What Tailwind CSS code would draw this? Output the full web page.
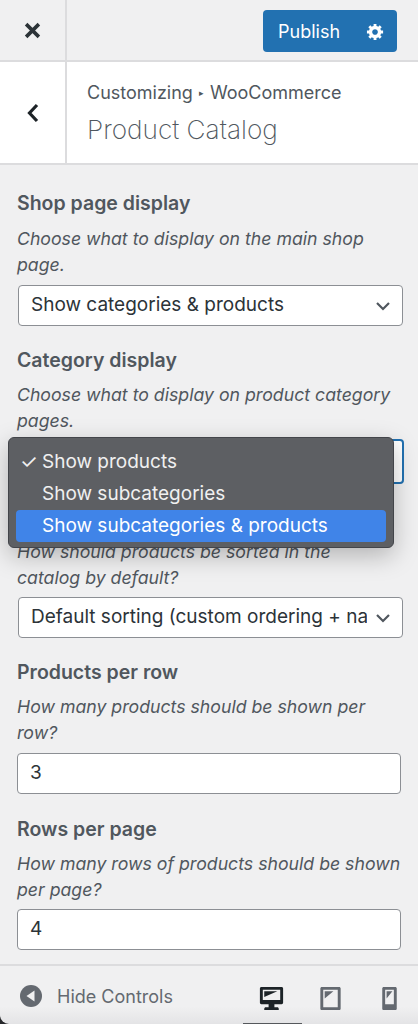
<!DOCTYPE html>
<html lang="en">
<head>
  <meta charset="UTF-8">
  <title>Product Catalog</title>
  <script src="https://cdn.jsdelivr.net/npm/@tailwindcss/browser@4"></script>
</head>
<body class="relative w-[418px] h-[1024px] overflow-hidden bg-[#f0f0f1] text-[#50575e] font-['Inter','Liberation_Sans',sans-serif]">

  <!-- Top bar -->
  <div class="flex h-[62px] border-b-2 border-[#dcdcde]">
    <div class="flex w-[67px] items-center justify-center border-r-2 border-[#dcdcde]">
      <svg class="w-[17px] h-[17px]" viewBox="0 0 16 16"><path d="M2 2l12 12M14 2L2 14" stroke="#2c3338" stroke-width="3.4" fill="none"/></svg>
    </div>
    <div class="flex flex-1 items-start justify-end pt-[10px] pr-[21px]">
      <button class="flex w-[134px] h-[42px] items-center justify-between pl-[15px] pr-[12px] rounded-[4px] bg-[#2271b1] text-white text-[18px]">
        Publish
        <svg class="w-[19px] h-[19px]" viewBox="0 0 20 20" fill="#fff"><path d="M18 12h-2.180c-.17.7-.44 1.35-.81 1.930l1.540 1.540-2.100 2.100-1.540-1.540c-.58.36-1.230.63-1.910.79V19H8v-2.180c-.68-.16-1.330-.43-1.910-.79l-1.540 1.540-2.120-2.120 1.540-1.540c-.36-.58-.63-1.230-.79-1.910H1V9.030h2.170c.16-.7.44-1.350.8-1.940L2.430 5.550l2.100-2.100 1.540 1.540c.58-.37 1.240-.64 1.930-.81V2h3v2.180c.68.16 1.330.43 1.910.79l1.540-1.540 2.120 2.120-1.540 1.540c.36.59.64 1.240.8 1.940H18V12zm-8.500 1.500c1.660 0 3-1.340 3-3s-1.340-3-3-3-3 1.340-3 3 1.340 3 3 3z"/></svg>
      </button>
    </div>
  </div>

  <!-- Section title -->
  <div class="flex h-[103px] bg-white border-b-2 border-[#dcdcde]">
    <div class="flex w-[67px] items-center justify-center border-r-2 border-[#dcdcde]">
      <svg class="w-[14px] h-[20px]" viewBox="0 0 14 20"><path d="M11 2L3.500 10l7.500 8" stroke="#1d2327" stroke-width="3.2" fill="none"/></svg>
    </div>
    <div class="pl-[20px] pt-[19px]">
      <div class="flex items-center text-[18px] leading-[24px]">Customizing<span class="mx-[6px] text-[9px]">▸</span>WooCommerce</div>
      <div class="mt-[10px] text-[26.2px] leading-[30px] font-extralight text-[#50575e]">Product Catalog</div>
    </div>
  </div>

  <!-- Controls -->
  <div class="px-[17px] pt-[26px]">
    <div class="text-[19.5px] leading-[24px] font-semibold">Shop page display</div>
    <p class="mt-[11px] text-[17.7px] leading-[26px] italic">Choose what to display on the main shop<br>page.</p>
    <div class="mt-[7px] flex w-[385px] h-[41px] ml-px items-center justify-between pl-[12px] pr-[11px] bg-white border border-[#8c8f94] rounded-[4px] text-[19px] text-[#2c3338]">
      Show categories &amp; products
      <svg class="w-[16px] h-[10px]" viewBox="0 0 16 10"><path d="M2 2l6 6 6-6" stroke="#50575e" stroke-width="2.200" fill="none"/></svg>
    </div>

    <div class="mt-[22px] text-[19.5px] leading-[24px] font-semibold">Category display</div>
    <p class="mt-[10px] text-[17.7px] leading-[26px] italic">Choose what to display on product category<br>pages.</p>
    <div class="mt-[5px] w-[386px] h-[45px] ml-px bg-white border-2 border-[#2271b1] rounded-[4px]"></div>

    <p class="mt-[55px] text-[17.7px] leading-[26px] italic">How should products be sorted in the<br>catalog by default?</p>
    <div class="mt-[6px] flex w-[385px] h-[41px] ml-px items-center justify-between pl-[12px] pr-[11px] bg-white border border-[#8c8f94] rounded-[4px] text-[19px] text-[#2c3338]">
      <span class="w-[336px] overflow-hidden whitespace-nowrap">Default sorting (custom ordering + name)</span>
      <svg class="w-[16px] h-[10px] shrink-0" viewBox="0 0 16 10"><path d="M2 2l6 6 6-6" stroke="#50575e" stroke-width="2.200" fill="none"/></svg>
    </div>

    <div class="mt-[22px] text-[19.5px] leading-[24px] font-semibold">Products per row</div>
    <p class="mt-[10px] text-[17.7px] leading-[26px] italic">How many products should be shown per<br>row?</p>
    <div class="mt-[7px] flex w-[384px] h-[41px] items-center pl-[12px] bg-white border border-[#8c8f94] rounded-[4px] text-[19px] text-[#2c3338]">3</div>

    <div class="mt-[23px] text-[19.5px] leading-[24px] font-semibold">Rows per page</div>
    <p class="mt-[10px] text-[17.7px] leading-[26px] italic">How many rows of products should be shown<br>per page?</p>
    <div class="mt-[6px] flex w-[384px] h-[41px] items-center pl-[12px] bg-white border border-[#8c8f94] rounded-[4px] text-[19px] text-[#2c3338]">4</div>
  </div>

  <!-- Footer, with the dark window corner behind it -->
  <div class="absolute left-0 right-0 bottom-0 h-[60px] bg-[#26282b]">
    <div class="flex h-full items-center pt-[2px] rounded-bl-[9px] bg-gradient-to-b from-[#f0f0f1] from-70% to-[#e4e4e6] border-t-2 border-[#dcdcde]">
      <svg class="ml-[19px] w-[24px] h-[24px]" viewBox="0 0 24 24"><circle cx="12" cy="12" r="11" fill="#646970"/><path d="M15.500 6.500v11L7.500 12z" fill="#f0f0f1"/></svg>
      <span class="ml-[14px] text-[18px] text-[#646970]">Hide Controls</span>
      <div class="ml-auto flex items-center gap-[30px] pr-[14px] mt-[5px]">
        <svg class="w-[29px] h-[29px]" viewBox="0 0 20 20" fill="#1d2327"><path d="M3 2h14c.55 0 1 .45 1 1v10c0 .55-.45 1-1 1h-5v2h2c.55 0 1 .45 1 1v1H5v-1c0-.55.45-1 1-1h2v-2H3c-.55 0-1-.45-1-1V3c0-.55.45-1 1-1zm13 9V4H4v7h12zM5 5h9L5 9V5z"/></svg>
        <svg class="w-[29px] h-[29px]" viewBox="0 0 20 20" fill="#646970"><path d="M4 2h12c.55 0 1 .45 1 1v14c0 .55-.45 1-1 1H4c-.55 0-1-.45-1-1V3c0-.55.45-1 1-1zm11 14V4H5v12h10zM6 5h6l-6 5V5z"/></svg>
        <svg class="w-[29px] h-[29px]" viewBox="0 0 20 20" fill="#646970"><path d="M6 2h8c.55 0 1 .45 1 1v14c0 .55-.45 1-1 1H6c-.55 0-1-.45-1-1V3c0-.55.45-1 1-1zm7 12V4H7v10h6zM8 5h4l-4 5V5z"/></svg>
      </div>
    </div>
    <div class="absolute left-[243px] bottom-0 w-[59px] h-px bg-[#55585c]"></div>
  </div>

  <!-- Native select popup -->
  <div class="absolute left-[8px] top-[437px] w-[386px] h-[111px] px-[7px] pt-[8px] rounded-[6px] bg-[#5d5f63] border border-[#43454a] shadow-[0_8px_24px_rgba(0,0,0,0.25)] text-[19px] text-[#f0f0f0]">
    <div class="relative flex h-[32px] items-center pl-[26px]"><span class="absolute left-[4px] top-[1px] text-[20px]">✓</span>Show products</div>
    <div class="flex h-[32px] items-center pl-[26px]">Show subcategories</div>
    <div class="flex h-[32px] items-center pl-[26px] rounded-[4px] bg-[#4084e8] text-white">Show subcategories &amp; products</div>
  </div>

</body>
</html>
